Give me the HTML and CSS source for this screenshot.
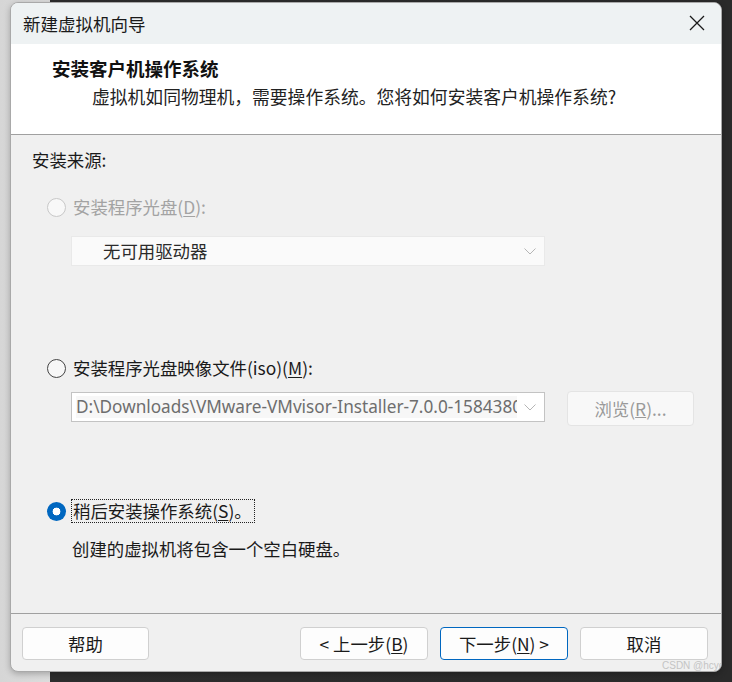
FILE: index.html
```html
<!DOCTYPE html>
<html lang="zh-CN">
<head>
<meta charset="utf-8">
<title>新建虚拟机向导</title>
<link rel="stylesheet" href="styles.css">
</head>
<body>
<div class="window">
  <div class="titlebar">
    <span class="title">新建虚拟机向导</span>
    <svg class="close" width="16" height="16" viewBox="0 0 16 16"><path d="M1 1 L15 15 M15 1 L1 15" stroke="#1a1a1a" stroke-width="1.3" fill="none"/></svg>
  </div>
  <div class="header">
    <div class="heading">安装客户机操作系统</div>
    <div class="subtitle">虚拟机如同物理机，需要操作系统。您将如何安装客户机操作系统?</div>
  </div>
  <div class="content">
    <div class="source">安装来源:</div>

    <div class="option option-first disabled">
      <span class="radio radio-disabled"></span>
      <span class="label">安装程序光盘(<u>D</u>):</span>
    </div>
    <div class="select select-disabled">
      <span class="select-text">无可用驱动器</span>
      <svg class="chev" width="12" height="7" viewBox="0 0 12 7"><polyline points="0.5,0.5 6,6 11.5,0.5" fill="none" stroke="#b5b5b5" stroke-width="1"/></svg>
    </div>

    <div class="option option-second">
      <span class="radio"></span>
      <span class="label">安装程序光盘映像文件(iso)(<u>M</u>):</span>
    </div>
    <div class="iso-row">
      <div class="select select-iso">
        <span class="iso-text">D:\Downloads\VMware-VMvisor-Installer-7.0.0-15843807-x86_64-DellEMC_Customized-A04.iso</span>
        <svg class="chev" width="12" height="7" viewBox="0 0 12 7"><polyline points="0.5,0.5 6,6 11.5,0.5" fill="none" stroke="#b5b5b5" stroke-width="1"/></svg>
      </div>
      <div class="browse">浏览(<u>R</u>)...</div>
    </div>

    <div class="option option-third">
      <span class="radio radio-checked"></span>
      <span class="label focus">稍后安装操作系统(<u>S</u>)。</span>
    </div>
    <div class="desc">创建的虚拟机将包含一个空白硬盘。</div>
  </div>
  <div class="footer">
    <div class="btn btn-help">帮助</div>
    <div class="btn-group">
      <div class="btn">&lt; 上一步(<u>B</u>)</div>
      <div class="btn btn-default">下一步(<u>N</u>) &gt;</div>
      <div class="btn">取消</div>
    </div>
  </div>
  <div class="watermark">CSDN @hcyc</div>
</div>
</body>
</html>
```
FILE: styles.css
```css
html, body {
  margin: 0;
  padding: 0;
}
body {
  width: 732px;
  height: 682px;
  overflow: hidden;
  background: linear-gradient(to right, #d6d6d6 0, #dcdcdc 50px, #2d2d2d 50px, #2a2a2a 100%);
  font-family: "Noto Sans CJK SC", "Noto Sans", sans-serif;
  color: #1a1a1a;
}
.window {
  position: relative;
  box-sizing: border-box;
  margin: 2px 0 0 10px;
  width: 712px;
  height: 670px;
  border: 1px solid #a9a9a9;
  border-radius: 8px;
  overflow: hidden;
  background: #f0f0f0;
  display: flex;
  flex-direction: column;
  box-shadow: 0 2px 6px rgba(0,0,0,0.25);
}
.titlebar {
  height: 41px;
  flex: none;
  background: #eef2f3;
  display: flex;
  align-items: center;
  justify-content: space-between;
  padding: 0 16px 0 12px;
}
.title {
  font-size: 17.5px;
  line-height: 22px;
  color: #1a1a1a;
}
.close {
  display: block;
  margin-top: -1px;
}
.header {
  height: 78px;
  flex: none;
  background: #ffffff;
  border-bottom: 1px solid #a0a0a0;
  padding: 12px 0 0 41px;
}
.heading {
  font-size: 18.5px;
  line-height: 24px;
  font-weight: 700;
  color: #111;
}
.subtitle {
  margin: 5px 0 0 40px;
  font-size: 17.8px;
  line-height: 22px;
  color: #222;
}
.content {
  flex: 1;
  padding: 15px 0 0 21px;
  font-size: 17.4px;
}
.source {
  line-height: 20px;
}
.option {
  display: flex;
  align-items: center;
  height: 20px;
  margin-left: 15px;
  gap: 7px;
  line-height: 20px;
}
.option-first { margin-top: 27px; }
.option-second { margin-top: 92px; }
.option-third { margin-top: 75px; }
.disabled .label { color: #a3a3a3; }
.radio {
  box-sizing: border-box;
  width: 19px;
  height: 19px;
  border-radius: 50%;
  border: 1px solid #444;
  background: #f7f7f7;
  flex: none;
}
.radio-disabled {
  border-color: #c8c8c8;
  background: #f8f8f8;
}
.radio-checked {
  border: none;
  background: radial-gradient(circle, #ffffff 0 3.6px, #0067c0 4.2px);
}
.label u { text-decoration-thickness: 1px; text-underline-offset: 2px; }
.focus {
  outline: 1px dotted #222;
  outline-offset: 1px;
  padding: 0 1px 0 0;
}
.select {
  box-sizing: border-box;
  height: 30px;
  width: 474px;
  margin-left: 39px;
  display: flex;
  align-items: center;
  justify-content: space-between;
  padding-right: 8px;
}
.select-disabled {
  margin-top: 19px;
  background: #fafafa;
  border: 1px solid #e9e9e9;
  padding-left: 31px;
}
.select-text {
  color: #2a2a2a;
  line-height: 20px;
}
.iso-row {
  display: flex;
  align-items: flex-start;
  margin-top: 13px;
  margin-left: 39px;
  gap: 22px;
}
.select-iso {
  margin: 1px 0 0 0;
  background: #ffffff;
  border: 1px solid #c3c3c3;
  padding-left: 4px;
}
.iso-text {
  display: block;
  width: 441px;
  overflow: hidden;
  white-space: nowrap;
  font-family: "Noto Sans", "Open Sans", sans-serif;
  font-size: 17.2px;
  line-height: 22px;
  color: #6e6e6e;
  background: #f7f7f7;
}
.browse {
  box-sizing: border-box;
  width: 127px;
  height: 35px;
  background: #f8f8f8;
  border: 1px solid #e4e4e4;
  border-radius: 4px;
  display: flex;
  align-items: center;
  justify-content: center;
  color: #9a9a9a;
  font-size: 17.4px;
}
.desc {
  margin: 18px 0 0 40px;
  line-height: 20px;
}
.footer {
  flex: none;
  height: 44px;
  border-top: 1px solid #a0a0a0;
  display: flex;
  align-items: flex-start;
  justify-content: space-between;
  padding: 13px 13px 0 11px;
}
.btn-group {
  display: flex;
  gap: 12px;
}
.btn {
  box-sizing: border-box;
  width: 128px;
  height: 33px;
  background: #fdfdfd;
  border: 1px solid #d0d0d0;
  border-radius: 4px;
  display: flex;
  align-items: center;
  justify-content: center;
  font-size: 17.4px;
  color: #1a1a1a;
}
.btn-help { width: 127px; }
.btn-default {
  border-color: #0067c0;
}
.btn u { text-underline-offset: 2px; }
.watermark {
  position: absolute;
  left: 651px;
  bottom: 0;
  font-family: "Liberation Sans", sans-serif;
  font-size: 10px;
  line-height: 11px;
  color: #c4c4c4;
  white-space: nowrap;
}
```
